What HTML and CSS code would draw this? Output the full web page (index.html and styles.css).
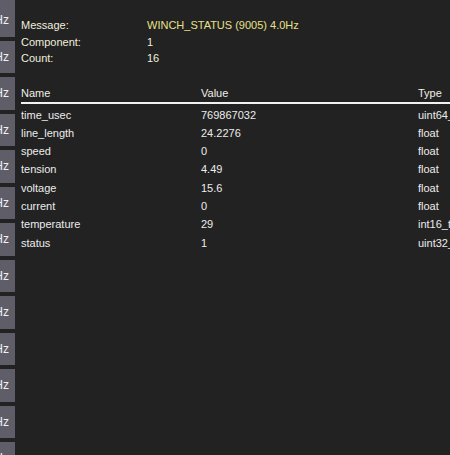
FILE: index.html
```html
<!DOCTYPE html>
<html>
<head>
<meta charset="utf-8">
<link rel="stylesheet" href="styles.css">
</head>
<body>
<div class="app">
  <div class="strip">
    <div class="btn first">Hz</div><div class="btn">Hz</div><div class="btn">Hz</div><div class="btn">Hz</div>
    <div class="btn">Hz</div><div class="btn">Hz</div><div class="btn">Hz</div><div class="btn">Hz</div>
    <div class="btn">Hz</div><div class="btn">Hz</div><div class="btn">Hz</div><div class="btn">Hz</div>
    <div class="btn">Hz</div>
  </div>
  <div class="main">
    <div class="info">
      <div class="lbl">Message:</div><div class="val msg">WINCH_STATUS (9005) 4.0Hz</div>
      <div class="lbl">Component:</div><div class="val">1</div>
      <div class="lbl">Count:</div><div class="val">16</div>
    </div>
    <div class="table">
      <div class="row head"><span class="c1">Name</span><span class="c2">Value</span><span class="c3">Type</span></div>
      <div class="row"><span class="c1">time_usec</span><span class="c2">769867032</span><span class="c3">uint64_t</span></div>
      <div class="row"><span class="c1">line_length</span><span class="c2">24.2276</span><span class="c3">float</span></div>
      <div class="row"><span class="c1">speed</span><span class="c2">0</span><span class="c3">float</span></div>
      <div class="row"><span class="c1">tension</span><span class="c2">4.49</span><span class="c3">float</span></div>
      <div class="row"><span class="c1">voltage</span><span class="c2">15.6</span><span class="c3">float</span></div>
      <div class="row"><span class="c1">current</span><span class="c2">0</span><span class="c3">float</span></div>
      <div class="row"><span class="c1">temperature</span><span class="c2">29</span><span class="c3">int16_t</span></div>
      <div class="row"><span class="c1">status</span><span class="c2">1</span><span class="c3">uint32_t</span></div>
    </div>
  </div>
</div>
</body>
</html>
```
FILE: styles.css
```css
html, body {
  margin: 0;
  padding: 0;
  background: #222222;
  overflow: hidden;
}
body {
  width: 450px;
  height: 455px;
  font-family: "Liberation Sans", Arial, sans-serif;
  font-size: 11px;
  color: #ececec;
}
.app {
  display: flex;
  height: 455px;
  overflow: hidden;
}
.strip {
  width: 15px;
  flex: none;
  display: flex;
  flex-direction: column;
  gap: 4px;
  overflow: hidden;
}
.btn {
  flex: none;
  height: 32.5px;
  background: #5e5d68;
  color: #f2f2f2;
  display: flex;
  align-items: center;
  justify-content: flex-end;
  padding-right: 6px;
  font-size: 12px;
  overflow: hidden;
  white-space: nowrap;
}
.btn.first {
  box-sizing: border-box;
  height: 36.5px;
  padding-top: 4px;
}
.main {
  flex: none;
  width: 600px;
  padding-left: 6px;
  padding-top: 17px;
}
.info {
  display: grid;
  grid-template-columns: 126px auto;
  line-height: 16.5px;
  color: #f0efdc;
}
.msg {
  color: #e8e08a;
}
.table {
  margin-top: 20px;
  width: 429px;
}
.row {
  display: flex;
  height: 18.3px;
  line-height: 18px;
  white-space: nowrap;
}
.row.head {
  border-bottom: 2px solid #f2f2f2;
  height: 15px;
  line-height: 13px;
  margin-bottom: 2px;
  color: #f0efe6;
}
.c1 { width: 180px; flex: none; }
.c2 { width: 217px; flex: none; }
.c3 { width: 100px; flex: none; }
```
